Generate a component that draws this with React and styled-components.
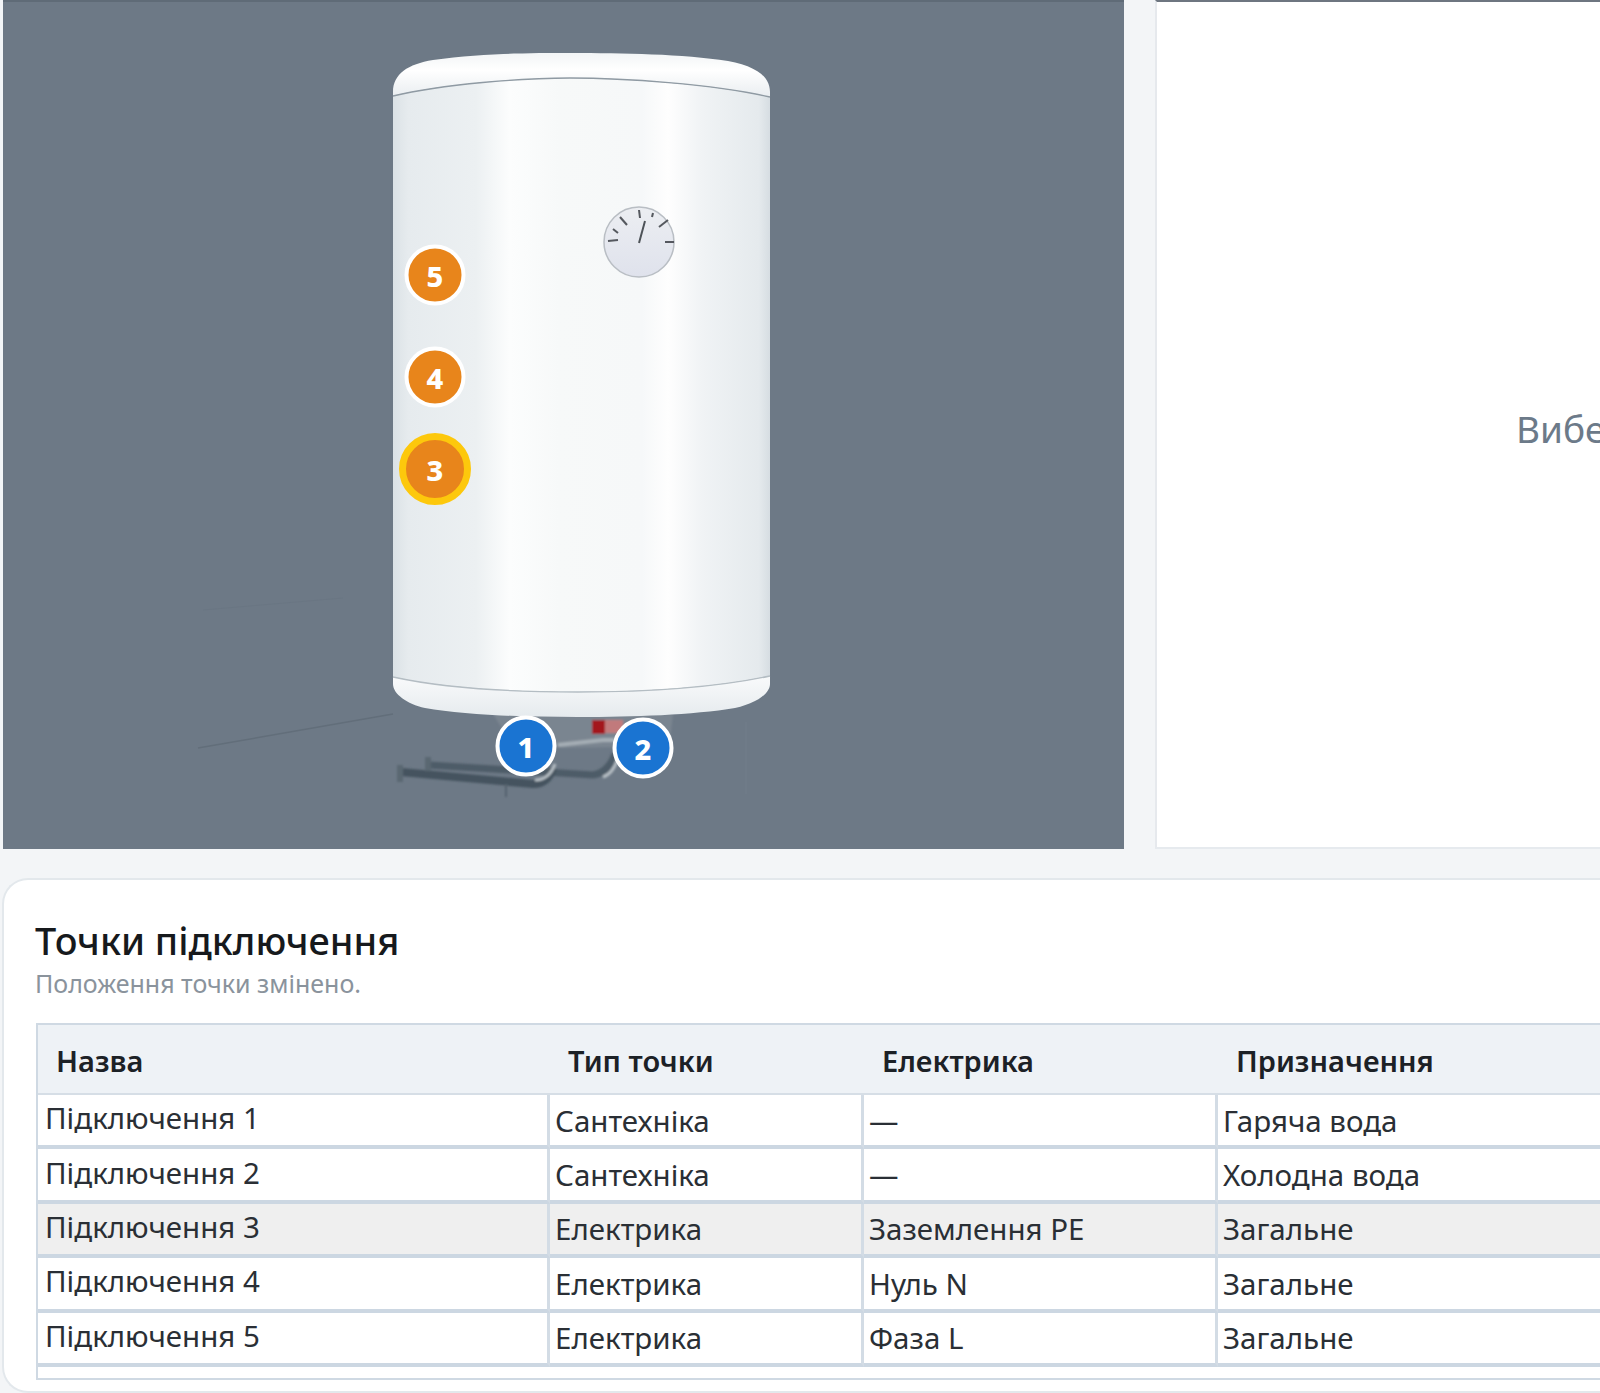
import React from 'react';
import styled, {createGlobalStyle} from 'styled-components';

const GlobalStyle = createGlobalStyle`
  html, body {
    margin: 0;
    padding: 0;
    height: 1393px;
    overflow: hidden;
    background: #f3f5f7;
    font-family: "Noto Sans", "Open Sans", sans-serif;
    color: #212529;
  }
`

const Page = styled.div`
  display: flex;
  flex-direction: column;
  width: 1900px;
  height: 1393px;
  padding-left: 3px;
  box-sizing: border-box;
`

const TopRow = styled.div`
  display: flex;
  gap: 31px;
  height: 849px;
`

const Viewer = styled.div`
  position: relative;
  width: 1121px;
  flex: none;
  background: #6d7986;
  border-top: 2px solid #5f6b77;
  box-sizing: border-box;
  overflow: hidden;
`

const TankDrawing = styled.svg`
  display: block;
  width: 1121px;
  height: 847px;
`

const Pin = styled.div`
  position: absolute;
  left: ${p => p.$x}px;
  top: ${p => p.$y}px;
  width: ${p => p.$selected ? 72 : 61}px;
  height: ${p => p.$selected ? 72 : 61}px;
  transform: translate(-50%, -50%);
  display: flex;
  align-items: center;
  justify-content: center;
  box-sizing: border-box;
  border-radius: 50%;
  border: ${p => p.$selected ? '7px solid #fdc80c' : '4px solid #fff'};
  background: ${p => p.$kind === 'water' ? '#1a74d2' : '#e8851b'};
  color: #fff;
  font-size: 29px;
  font-weight: 800;
  line-height: 1;
`

const Panel = styled.div`
  flex: 1;
  display: flex;
  align-items: center;
  padding-left: 359px;
  background: #fff;
  border-top: 2px solid #6e7680;
  border-left: 2px solid #e6e9ed;
  border-bottom: 2px solid #e6eaee;
  box-sizing: border-box;
  overflow: hidden;
`

const Hint = styled.div`
  font-size: 37px;
  color: #6c7a89;
  white-space: nowrap;
  margin-top: 8px;
`

const Card = styled.section`
  margin-top: 29px;
  margin-left: -1px;
  height: 520px;
  padding: 37px 0 0 32px;
  box-sizing: border-box;
  background: #fff;
  border: 2px solid #e3e8ec;
  border-right: 0;
  border-radius: 26px 0 0 26px;
`

const Title = styled.h2`
  margin: 0 0 0 -1px;
  font-size: 37.8px;
  font-weight: 500;
  line-height: 48px;
  color: #16191c;
`

const Subtitle = styled.p`
  margin: 0 0 22px -1px;
  font-size: 25px;
  line-height: 36px;
  color: #8a939c;
`

const TableWrap = styled.div`
  border: 2px solid #cfd9e3;
  padding-bottom: 11px;
`

const Table = styled.table`
  width: 1680px;
  table-layout: fixed;
  border-collapse: separate;
  border-spacing: 0;
`

const HeadCell = styled.th`
  width: ${p => p.$w}px;
  height: 70px;
  padding: 3px 0 0 18px;
  box-sizing: border-box;
  background: #eef2f6;
  border-bottom: 2px solid #d6dee6;
  text-align: left;
  font-size: 29px;
  font-weight: 600;
  color: #1c2126;
`

const Cell = styled.td`
  height: 54.4px;
  padding: ${p => p.$lead ? '0 0 5px 7px' : '0 0 0 5px'};
  box-sizing: border-box;
  background: ${p => p.$active ? '#efefef' : '#fff'};
  border-right: 3px solid #d3dce5;
  border-bottom: 4px solid #ccd7e2;
  font-size: 29.5px;
  color: #2a2f35;
  white-space: nowrap;
`

const columns = [
  {title: 'Назва', width: 512},
  {title: 'Тип точки', width: 314},
  {title: 'Електрика', width: 354},
  {title: 'Призначення', width: 500},
]

const points = [
  {name: 'Підключення 1', type: 'Сантехніка', electric: '—', purpose: 'Гаряча вода'},
  {name: 'Підключення 2', type: 'Сантехніка', electric: '—', purpose: 'Холодна вода'},
  {name: 'Підключення 3', type: 'Електрика', electric: 'Заземлення PE', purpose: 'Загальне', active: true},
  {name: 'Підключення 4', type: 'Електрика', electric: 'Нуль N', purpose: 'Загальне'},
  {name: 'Підключення 5', type: 'Електрика', electric: 'Фаза L', purpose: 'Загальне'},
]

const pins = [
  {id: 1, x: 523, y: 744, kind: 'water'},
  {id: 2, x: 640, y: 746, kind: 'water'},
  {id: 3, x: 432, y: 467, kind: 'power', selected: true},
  {id: 4, x: 432, y: 375, kind: 'power'},
  {id: 5, x: 432, y: 273, kind: 'power'},
]

const gaugeTicks = [
  [605, 239, 615, 238], [610, 227, 615, 231], [617, 215, 624, 223], [636, 208, 637, 216],
  [650, 211, 649, 215], [665, 218, 656, 225], [671, 240, 662, 240],
]

// coordinates are the picture's own, shifted by the viewer's top-left corner
const Tank = () => (
  <TankDrawing viewBox="0 0 1121 847">
    <defs>
      <filter id="soft" x="-5%" y="-5%" width="110%" height="110%">
        <feGaussianBlur stdDeviation="0.7"/>
      </filter>
      <filter id="softer" x="-20%" y="-20%" width="140%" height="140%">
        <feGaussianBlur stdDeviation="1.3"/>
      </filter>
      <linearGradient id="body" x1="390" x2="767" y1="0" y2="0" gradientUnits="userSpaceOnUse">
        <stop offset="0" stopColor="#dbe2e6"/>
        <stop offset="0.04" stopColor="#e6ebee"/>
        <stop offset="0.22" stopColor="#ecf0f2"/>
        <stop offset="0.31" stopColor="#fcfdfd"/>
        <stop offset="0.44" stopColor="#f7f9f9"/>
        <stop offset="0.66" stopColor="#f6f8f9"/>
        <stop offset="0.73" stopColor="#fefefe"/>
        <stop offset="0.82" stopColor="#f0f3f5"/>
        <stop offset="0.97" stopColor="#e5eaed"/>
        <stop offset="1" stopColor="#d6dde2"/>
      </linearGradient>
      <linearGradient id="cap" x1="0" x2="0" y1="51" y2="94" gradientUnits="userSpaceOnUse">
        <stop offset="0" stopColor="#f2f5f6"/>
        <stop offset="0.4" stopColor="#ffffff"/>
        <stop offset="1" stopColor="#eaeef1"/>
      </linearGradient>
      <linearGradient id="base" x1="0" x2="0" y1="672" y2="714" gradientUnits="userSpaceOnUse">
        <stop offset="0" stopColor="#fafbfc"/>
        <stop offset="1" stopColor="#e6ebee"/>
      </linearGradient>
      <linearGradient id="dial" x1="0" x2="0" y1="205" y2="275" gradientUnits="userSpaceOnUse">
        <stop offset="0" stopColor="#eceef2"/>
        <stop offset="1" stopColor="#dfe2ec"/>
      </linearGradient>
    </defs>

    <path d="M195 746 L390 712" stroke="#626e7a" strokeWidth="1.5" fill="none"/>
    <path d="M200 608 L340 596" stroke="#6a7683" strokeWidth="1" fill="none"/>
    <path d="M743 720 V792" stroke="#727e8a" strokeWidth="1" fill="none"/>

    {/* fittings under the tank */}
    <g filter="url(#softer)">
      <path d="M490 712 H670 L666 745 H620 L560 746 L505 736 Z" fill="#7a8590"/>
      <rect x="589" y="718" width="13" height="14" fill="#a3121c"/>
      <rect x="602" y="718" width="18" height="13" fill="#c17a7c"/>
      <path d="M555 743 L600 738 L612 738" stroke="#a5aeb5" strokeWidth="4" fill="none"/>
      <path d="M425 763 L590 773 Q605 771 612 752" stroke="#4e5c67" strokeWidth="7" fill="none"/>
      <path d="M398 770 L530 782 Q545 782 550 766" stroke="#45535e" strokeWidth="8" fill="none"/>
      <path d="M397 763 V780 M425 755 V769" stroke="#5a6772" strokeWidth="6" fill="none"/>
      <path d="M532 778 Q546 778 552 762 M600 775 Q610 772 615 756" stroke="#b5bdc3" strokeWidth="3" fill="none"/>
      <path d="M503 782 V795" stroke="#55626d" strokeWidth="2"/>
    </g>

    {/* tank body */}
    <g filter="url(#soft)">
      <path d="M390 94 C440 82 520 76 567 76 C620 76 710 82 767 95 V674 C710 686 640 690 575 690 C510 690 440 686 390 675 Z" fill="url(#body)"/>
      <path d="M390 94 V90 C390 72 405 62 430 58 C480 51 530 51 567 51 C620 51 680 52 725 59 C752 64 767 74 767 90 V95 C710 82 620 76 567 76 C520 76 440 82 390 94 Z" fill="url(#cap)"/>
      <path d="M390 675 C440 686 510 690 575 690 C640 690 710 686 767 674 V682 C767 692 752 702 732 706 C690 713 630 715 575 715 C520 715 460 713 422 706 C404 702 390 692 390 682 Z" fill="url(#base)"/>
      <path d="M390 94 C440 82 520 76 567 76 C620 76 710 82 767 95" stroke="#8f9aa3" strokeWidth="1.3" fill="none"/>
      <path d="M390 675 C440 686 510 690 575 690 C640 690 710 686 767 674" stroke="#b4bdc3" strokeWidth="1.3" fill="none"/>

      {/* temperature dial */}
      <circle cx="636" cy="240" r="35" fill="url(#dial)" stroke="#b9bec4" strokeWidth="1.5"/>
      {gaugeTicks.map(([x1, y1, x2, y2], i) => (
        <line key={i} x1={x1} y1={y1} x2={x2} y2={y2} stroke="#55595e" strokeWidth="2"/>
      ))}
      <line x1="636" y1="241" x2="642" y2="219" stroke="#4e5358" strokeWidth="2"/>
    </g>
  </TankDrawing>
)

const App = () => (
  <Page>
    <GlobalStyle/>
    <TopRow>
      <Viewer>
        <Tank/>
        {pins.map(pin => (
          <Pin key={pin.id} $x={pin.x} $y={pin.y} $kind={pin.kind} $selected={pin.selected}>{pin.id}</Pin>
        ))}
      </Viewer>
      <Panel>
        <Hint>Виберіть точку</Hint>
      </Panel>
    </TopRow>
    <Card>
      <Title>Точки підключення</Title>
      <Subtitle>Положення точки змінено.</Subtitle>
      <TableWrap>
        <Table>
          <thead>
            <tr>
              {columns.map(col => <HeadCell key={col.title} $w={col.width}>{col.title}</HeadCell>)}
            </tr>
          </thead>
          <tbody>
            {points.map(point => (
              <tr key={point.name}>
                <Cell $lead $active={point.active}>{point.name}</Cell>
                <Cell $active={point.active}>{point.type}</Cell>
                <Cell $active={point.active}>{point.electric}</Cell>
                <Cell $active={point.active}>{point.purpose}</Cell>
              </tr>
            ))}
          </tbody>
        </Table>
      </TableWrap>
    </Card>
  </Page>
);

export default App;
